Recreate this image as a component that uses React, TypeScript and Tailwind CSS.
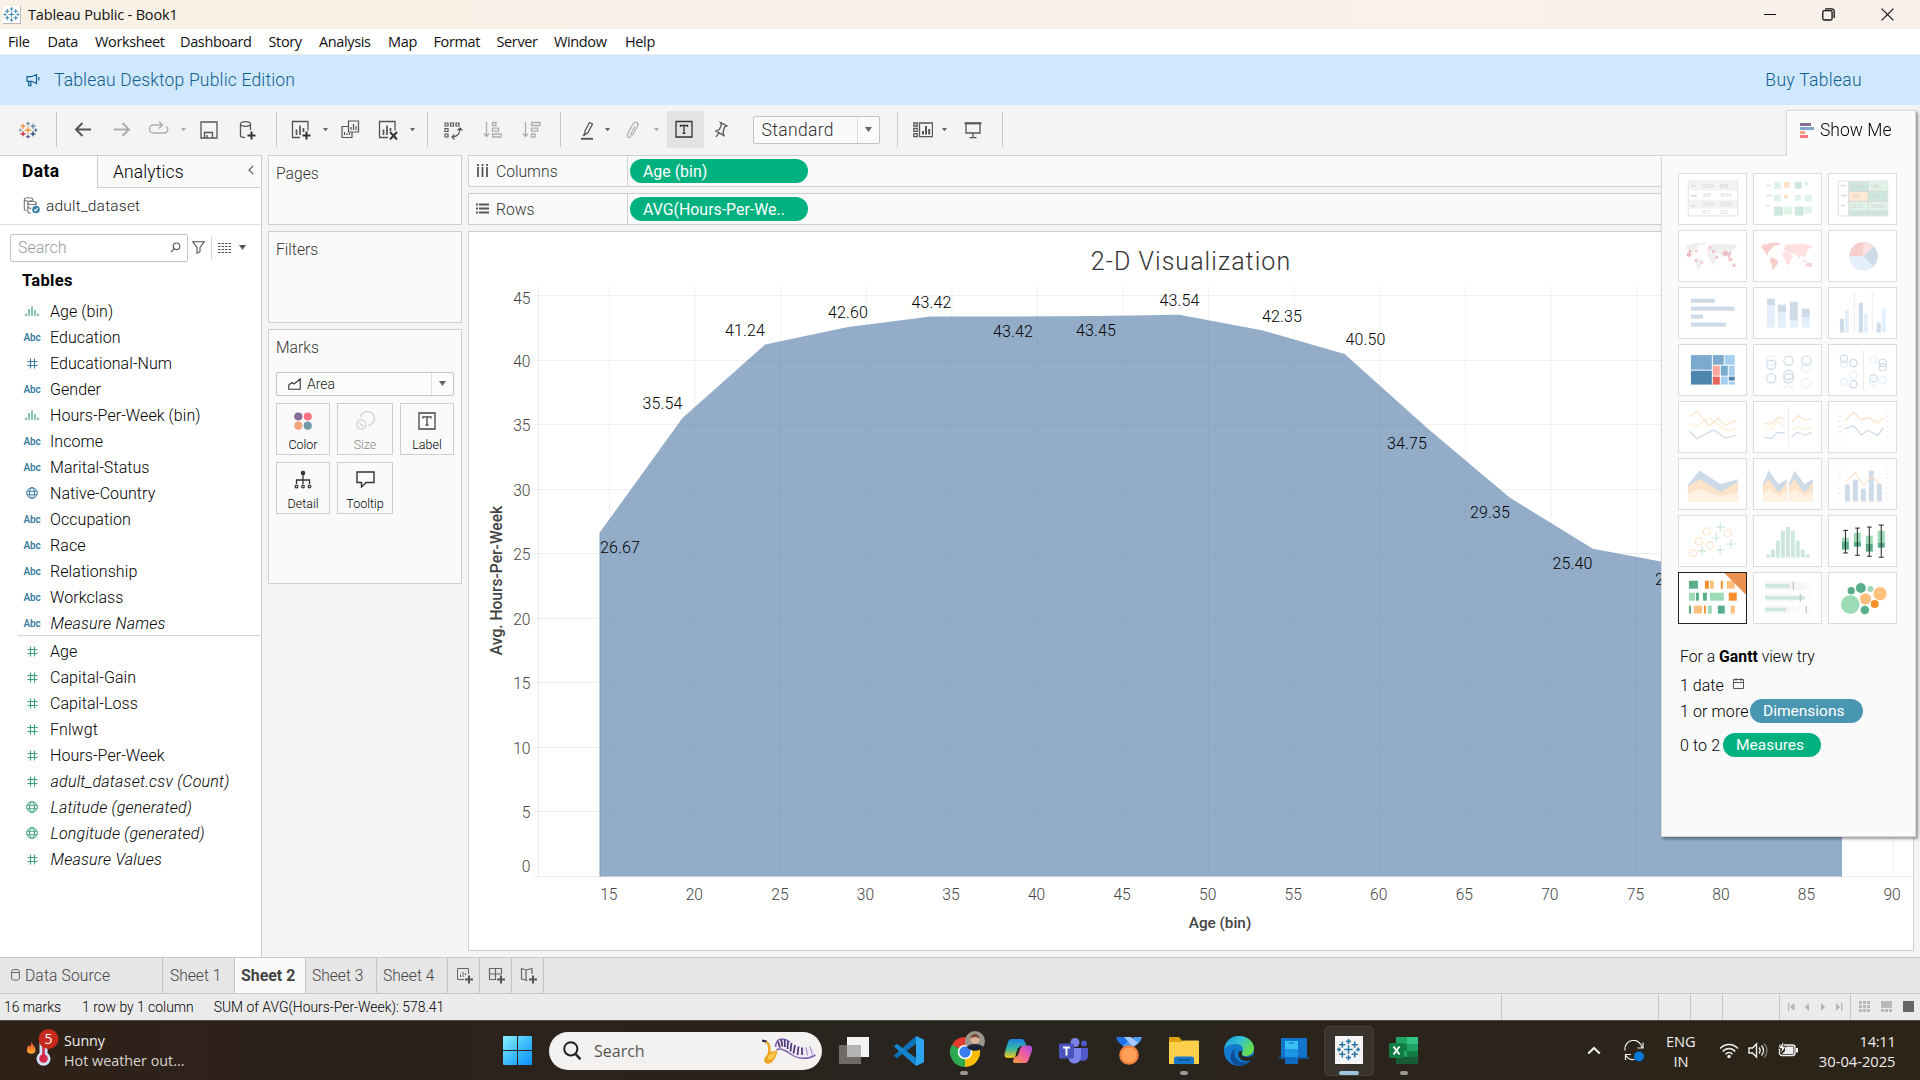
import type { ReactNode } from "react";

/* ---------- shared glyphs ---------- */

function Caret({ color = "#666", w = 6 }: { color?: string; w?: number }) {
  return (
    <svg width={w} height={w * 0.7} viewBox="0 0 6 4" preserveAspectRatio="none" className="block shrink-0">
      <path d="M0 0h6L3 4z" fill={color} />
    </svg>
  );
}

const PLUSES: [number, number, number, string][] = [
  [12, 12, 4, "#eb912c"],
  [12, 4.2, 2.4, "#7199a6"],
  [12, 19.8, 2.4, "#5c6692"],
  [6, 7.4, 3, "#eb912c"],
  [18, 7.4, 3, "#59879b"],
  [6, 16.6, 3, "#c72037"],
  [18, 16.6, 3, "#1f447e"],
  [2.8, 12, 1.9, "#8aa0b8"],
  [21.2, 12, 1.9, "#5c6692"],
];

function TableauMark({ size, mono }: { size: number; mono?: string }) {
  return (
    <svg width={size} height={size} viewBox="0 0 24 24" className="block shrink-0">
      {PLUSES.map(([x, y, r, c]) => (
        <path key={`${x}-${y}`} d={`M${x - r} ${y}h${r * 2}M${x} ${y - r}v${r * 2}`} stroke={mono ?? c} strokeWidth={1.5} fill="none" />
      ))}
    </svg>
  );
}

function Ico({ children, color = "#555", className = "" }: { children: ReactNode; color?: string; className?: string }) {
  return (
    <svg width="20" height="20" viewBox="0 0 20 20" fill="none" stroke={color} strokeWidth="1.3" className={`block shrink-0 ${className}`}>
      {children}
    </svg>
  );
}

function Sep({ className = "" }: { className?: string }) {
  return <div className={`h-[35px] w-px shrink-0 bg-[#c9c9c9] ${className}`} />;
}

/* ---------- window chrome ---------- */

function TitleBar() {
  return (
    <div className="flex h-[29px] items-center bg-gradient-to-r from-[#f9f1e5] to-[#f9f0eb] pl-[3px]">
      <div className="flex size-[18px] items-center justify-center border-r border-b border-[#b9b9b9] bg-white">
        <TableauMark size={17} mono="#3f86b3" />
      </div>
      <span className="ml-[7px] font-['Open_Sans'] text-[14.5px] tracking-[-0.16px] text-[#111]">Tableau Public - Book1</span>
      <div className="ml-auto flex items-center pr-[26px]">
        <svg width="12" height="12" viewBox="0 0 12 12" className="block"><path d="M0 5.5h12" stroke="#111" /></svg>
        <svg width="13" height="13" viewBox="0 0 13 13" fill="none" stroke="#111" strokeWidth="1.3" className="ml-[46px] block">
          <rect x="0.8" y="2.7" width="9.3" height="9.3" rx="1.5" />
          <path d="M3 .8h6.5a2.7 2.7 0 0 1 2.7 2.7v6.6" />
        </svg>
        <svg width="13" height="13" viewBox="0 0 13 13" className="ml-[46px] block"><path d="M.6.6l11.8 11.8M12.4.6.6 12.4" stroke="#111" strokeWidth="1.2" /></svg>
      </div>
    </div>
  );
}

const MENU: [string, string][] = [
  ["File", "w-[39.5px]"], ["Data", "w-[47.5px]"], ["Worksheet", "w-[85px]"], ["Dashboard", "w-[88.5px]"], ["Story", "w-[50.5px]"],
  ["Analysis", "w-[69px]"], ["Map", "w-[45.5px]"], ["Format", "w-[63px]"], ["Server", "w-[57.5px]"], ["Window", "w-[71px]"], ["Help", "w-[40px]"],
];

function MenuBar() {
  return (
    <div className="flex h-[26px] items-center border-b border-[#ededed] bg-white pt-[1px] pl-[8px] font-['Open_Sans'] text-[14.5px] tracking-[-0.36px] text-[#111]">
      {MENU.map(([label, w]) => (
        <span key={label} className={`${w} shrink-0`}>{label}</span>
      ))}
    </div>
  );
}

function Banner() {
  return (
    <div className="flex h-[50px] items-center bg-[#cfe8fe] pr-[58px] pl-[26px] text-[17.5px] font-light text-[#11608f]">
      <svg width="14" height="14" viewBox="0 0 14 14" fill="none" stroke="#11608f" strokeWidth="1.2">
        <path d="M1 3.7h4.500L10.500 1.600v8.800L5.500 8.300H1zM2.700 8.500v4.200h2.200V8.500M10.500 1v10.200M12.800 4v3.600" />
      </svg>
      <span className="ml-[14px] tracking-[0.18px]">Tableau Desktop Public Edition</span>
      <span className="ml-auto tracking-[0.32px]">Buy Tableau</span>
    </div>
  );
}

const GREY = "#adadad";

function Toolbar() {
  return (
    <div className="flex h-[50px] items-center bg-[#f4f4f4] pb-px">
      <div className="ml-[17.5px]"><TableauMark size={20} /></div>
      <Sep className="ml-[18.5px]" />
      <Ico className="ml-[16px]"><path d="M18 9.500H3M9.500 3 3 9.500 9.500 16" strokeWidth="2" /></Ico>
      <Ico className="ml-[19px]" color={GREY}><path d="M2 9.500h15M10.500 3 17 9.500 10.500 16" strokeWidth="2" /></Ico>
      <Ico className="ml-[17px]" color={GREY}><path d="M13 5H4.500a3.500 3.500 0 0 0 0 8h11a3.500 3.500 0 0 0 1.500-6.500M10 1.500 13.500 5 10 8.500" strokeWidth="1.400" /></Ico>
      <div className="ml-[11.500px]"><Caret color={GREY} w={5} /></div>
      <Ico className="ml-[13.500px]"><path d="M2 2h16v16H2zM5.500 18v-5.500h8V18M8 18v-3" /></Ico>
      <Ico className="ml-[18px]">
        <ellipse cx="8.500" cy="4" rx="5" ry="2.300" /><path d="M3.500 4v11.500c0 1 2 2 4.500 2M13.500 4v6" /><path d="M14.500 11.500v8M10.500 15.500h8" stroke="#333" strokeWidth="2" />
      </Ico>
      <Sep className="ml-[19px]" />
      <Ico className="ml-[14px]"><path d="M9 17.500H1.500V1.500h15.500v9" /><path d="M5.500 15V9.500M9 15V5.500M12.500 12V8" strokeWidth="1.700" /><path d="M15.500 11.500v8M11.500 15.500h8" stroke="#333" strokeWidth="2" /></Ico>
      <div className="ml-[11.500px]"><Caret w={5} /></div>
      <Ico className="ml-[12.500px]"><path d="M8.500 1h10v11h-10zM8 6.500H2v11h10v-5M11 10V7M13.500 10V4M16 10V6M4.500 15v-3M7 15v-2M9.500 15v-2" strokeWidth="1.200" /></Ico>
      <Ico className="ml-[17.500px]"><path d="M10 17.500H1.500V1.500h15.500v9" /><path d="M5.500 15V9.500M9 15V5.500M12.500 11V8" strokeWidth="1.700" /><path d="m12 12 7 7.500M19 12l-7 7.500" stroke="#333" strokeWidth="2" /></Ico>
      <div className="ml-[12px]"><Caret w={5} /></div>
      <Sep className="ml-[12px]" />
      <Ico className="ml-[15px]"><path d="M2 3h3v3H2zM7.500 3h3v3h-3zM13 3h3v3h-3zM2 8.500h3v3H2zM2 14h3v3H2zM9 17c5 0 8-3 8-9M11.500 14.500 9 17l2.500 2.500M14.500 10.500 17 8l2.500 2.500" strokeWidth="1.200" /></Ico>
      <Ico className="ml-[20px]" color={GREY}><path d="M3.500 2v14M1 13.500l2.500 3 2.500-3M9.500 2.500h3.500v3H9.500zM9.500 8.200h6v3h-6zM9.500 14h8.500v3H9.500z" /></Ico>
      <Ico className="ml-[19px]" color={GREY}><path d="M3.500 2v14M1 13.500l2.500 3 2.500-3M9.500 2.500H18v3H9.500zM9.500 8.200h6v3h-6zM9.500 14h3.500v3H9.500z" /></Ico>
      <Sep className="ml-[18px]" />
      <Ico className="ml-[16px]"><path d="m8 11 4.500-8.500 3 1.500L11 12.500 7.500 15zM6 15.500l1-1.500" /><path d="M4 18.800h12" strokeWidth="1.900" /></Ico>
      <div className="ml-[8.500px]"><Caret w={5} /></div>
      <Ico className="ml-[12.500px]" color={GREY}><path d="M12 6.500 8 13.500c-.8 1.500 1 2.400 1.800 1l4.700-8.200c1.900-3.600-2.500-5.700-4.300-2.600l-5 8.800c-2.400 4.600 1 6.200 3.200 3.800" strokeWidth="1.200" /></Ico>
      <div className="ml-[11.500px]"><Caret color={GREY} w={5} /></div>
      <div className="ml-[7.500px] flex h-[37px] w-[37px] shrink-0 items-center justify-center bg-[#e3e3e3] pr-[2px] pb-[1px]">
        <Ico color="#333"><path d="M2 2.500h16v15.500H2zM6.500 8v-1.500h7V8M10 6.500v8M8.500 14.300h3" /></Ico>
      </div>
      <Ico className="ml-[7px]"><path d="m9.500 2.500 6.500 3.500-2.500 1-1.500 5.500 1 3-8-4.500 3.500-1.500 2-5zM8 12.500l-3 4.500" strokeWidth="1.300" /></Ico>
      <div className="ml-[22px] flex h-[28px] w-[127px] shrink-0 items-center rounded-[2px] border border-[#c4c4c4] bg-[#fafafa]">
        <span className="flex-1 pt-[1px] pl-[8px] text-[17.500px] font-light tracking-[0.350px] text-[#333]">Standard</span>
        <div className="flex h-full w-[22px] items-center justify-center border-l border-[#ddd]"><Caret w={7} /></div>
      </div>
      <Sep className="ml-[17px]" />
      <Ico className="ml-[15px]"><path d="M.800 3h3.400v3H.800zM.800 8.300h3.400v3H.800zM.800 13.600h3.400v3H.800zM6.500 3h13v13.600h-13z" /><path d="M10 14.500V11M13 14.500V6M16.200 14.500V9" strokeWidth="2" /></Ico>
      <div className="ml-[9px]"><Caret w={5} /></div>
      <Ico className="ml-[16px]"><path d="M3 3.500h14v9.500H3zM10 13v4.500M6.500 17.700h7" /><path d="M1.500 3.200h17" strokeWidth="1.900" /></Ico>
      <Sep className="ml-[19px]" />
    </div>
  );
}

/* ---------- data pane ---------- */

type Kind = "bin" | "abc" | "num" | "geo";
const DIMS: [Kind, string, boolean?][] = [
  ["bin", "Age (bin)"], ["abc", "Education"], ["num", "Educational-Num"], ["abc", "Gender"], ["bin", "Hours-Per-Week (bin)"],
  ["abc", "Income"], ["abc", "Marital-Status"], ["geo", "Native-Country"], ["abc", "Occupation"], ["abc", "Race"],
  ["abc", "Relationship"], ["abc", "Workclass"], ["abc", "Measure Names", true],
];
const MEAS: [Kind, string, boolean?][] = [
  ["num", "Age"], ["num", "Capital-Gain"], ["num", "Capital-Loss"], ["num", "Fnlwgt"], ["num", "Hours-Per-Week"],
  ["num", "adult_dataset.csv (Count)", true], ["geo", "Latitude (generated)", true], ["geo", "Longitude (generated)", true], ["num", "Measure Values", true],
];

function KindIcon({ kind, color }: { kind: Kind; color: string }) {
  if (kind === "abc") return <span className="text-[10px] font-semibold tracking-[-0.2px]" style={{ color }}>Abc</span>;
  if (kind === "bin")
    return (
      <svg width="14" height="10" viewBox="0 0 14 10"><path d="M1 7.500V10M4 3v7M7 .500V10M10 4v6M13 7.500V10" stroke="#3ba27c" strokeWidth="1.200" /></svg>
    );
  if (kind === "num")
    return (
      <svg width="11" height="11" viewBox="0 0 11 11"><path d="M3.500.500v10M7.500.500v10M.500 3.500h10M.500 7.500h10" stroke={color} strokeWidth="1.100" /></svg>
    );
  return (
    <svg width="12" height="12" viewBox="0 0 12 12" fill="none" stroke={color} strokeWidth="1"><circle cx="6" cy="6" r="5.300" /><ellipse cx="6" cy="6" rx="2.500" ry="5.300" /><path d="M1.200 4.200h9.600M1.200 7.800h9.600" /></svg>
  );
}

function Field({ f, color }: { f: [Kind, string, boolean?]; color: string }) {
  return (
    <div className="flex h-[26px] items-center pl-[24px]">
      <div className="flex w-[16px] justify-center">
        <KindIcon kind={f[0]} color={color} />
      </div>
      <span className={f[2] ? "ml-[10.5px] pt-[1px] text-[16px] font-light tracking-[0.22px] italic" : "ml-[10px] pt-[1px] text-[16px] font-light tracking-[0.07px]"}>{f[1]}</span>
    </div>
  );
}

function DataPane() {
  return (
    <div className="flex w-[262px] shrink-0 flex-col border-t border-r border-[#cfcfcf] bg-white text-black">
      <div className="flex h-[32px]">
        <div className="flex w-[97px] items-center pb-[1px] pl-[22px] text-[17.5px] font-bold tracking-[0.4px]">Data</div>
        <div className="flex flex-1 items-center border-b border-l border-[#cfcfcf] bg-[#fafafa] pt-[1px] pl-[15px]">
          <span className="text-[17.5px] font-light tracking-[0.12px]">Analytics</span>
          <svg width="6" height="10" viewBox="0 0 6 10" className="mr-[7px] mb-[4px] ml-auto"><path d="M5.200.800 1 5l4.200 4.200" fill="none" stroke="#555" strokeWidth="1.200" /></svg>
        </div>
      </div>
      <div className="flex h-[37px] items-center border-b border-[#dedede] pl-[23px]">
        <svg width="18" height="17" viewBox="0 0 18 17" fill="none" stroke="#777" strokeWidth="1.100" className="mb-[2px]">
          <ellipse cx="5.500" cy="2.500" rx="4.200" ry="1.700" /><path d="M1.300 2.500v9.500c0 .8 1 1.300 2 1.600M9.700 2.500v1" /><ellipse cx="9" cy="6" rx="4.200" ry="1.700" /><path d="M4.800 6v8.500c0 .8 1.500 1.500 3 1.700M13.200 6v2.500M4.800 10c.5 1 2 1.300 3.500 1.400" />
          <circle cx="13" cy="12.500" r="3.800" fill="#3c83a8" stroke="none" /><path d="m11.300 12.500 1.300 1.300 2-2.600" stroke="#fff" />
        </svg>
        <span className="ml-[5px] pt-[1px] text-[15.500px] font-light tracking-[0.200px] text-[#222]">adult_dataset</span>
      </div>
      <div className="mt-[8px] flex h-[29px] items-center pl-[10px]">
        <div className="flex h-[28px] w-[178px] items-center rounded-[2px] border border-[#c4c4c4] pr-[6px] pl-[7px]">
          <span className="text-[16px] font-light text-[#999]">Search</span>
          <svg width="11" height="11" viewBox="0 0 11 11" className="ml-auto" fill="none" stroke="#555" strokeWidth="1.100"><circle cx="6.500" cy="4.300" r="3.300" /><path d="M4.200 6.800.800 10.200" /></svg>
        </div>
        <svg width="13" height="13" viewBox="0 0 13 13" className="ml-[4px]" fill="none" stroke="#555" strokeWidth="1.100"><path d="M.800.800h11.400L8 6.500v4.200L5 12.200V6.500z" /></svg>
        <div className="ml-[6px] h-[22px] w-px bg-[#d0d0d0]" />
        <svg width="13" height="10" viewBox="0 0 13 10" className="ml-[6px]"><path d="M0 .500h13M0 3.500h13M0 6.500h13M0 9.500h13" stroke="#555" strokeWidth="1" strokeDasharray="2.500 1" /></svg>
        <div className="ml-[8px]"><Caret w={7} color="#555" /></div>
      </div>
      <div className="mt-[7px] flex h-[24px] items-center pl-[22px] text-[16.500px] font-bold tracking-[0.300px]">Tables</div>
      <div className="mt-[5px]">
        {DIMS.map((f) => <Field key={f[1]} f={f} color="#3a7d9f" />)}
      </div>
      <div className="mt-[-1px] ml-[18px] h-px bg-[#d4d4d4]" />
      <div className="mt-[2px]">
        {MEAS.map((f) => <Field key={f[1]} f={f} color="#3ba27c" />)}
      </div>
    </div>
  );
}

/* ---------- cards ---------- */

function MarkButton({ label, w, dim, children }: { label: string; w: string; dim?: boolean; children: ReactNode }) {
  return (
    <div className={`flex h-[52px] ${w} flex-col items-center border border-[#cecece] bg-[#fafafa]`}>
      <div className="flex h-[34px] items-center">{children}</div>
      <span className={`font-light text-[12.5px] leading-[14px] ${dim ? "text-[#888]" : "text-[#000]"}`}>{label}</span>
    </div>
  );
}

function Cards() {
  const title = "text-[15.7px] font-light text-[#333]";
  const card = "border border-[#d0d0d0] bg-[#fafafa] pl-[7px]";
  return (
    <div className="ml-[6px] flex w-[194px] shrink-0 flex-col">
      <div className={`${card} h-[70px] pt-[6px]`}><span className={title}>Pages</span></div>
      <div className={`${card} mt-[6px] h-[92px] pt-[6px]`}><span className={title}>Filters</span></div>
      <div className={`${card} mt-[6px] h-[255px] pt-[6px]`}>
        <div className={title}>Marks</div>
        <div className="mt-[12px] flex h-[24px] w-[178px] items-center rounded-[2px] border border-[#c4c4c4] bg-[#fcfcfc] pl-[11px]">
          <svg width="13" height="12" viewBox="0 0 13 12" fill="none" stroke="#333" strokeWidth="1.100"><path d="M.800 11.300V7L4 4.500l2 1.500L12.200.800v10.500z" /></svg>
          <span className="ml-[6px] flex-1 pt-[1px] text-[14px] font-light text-[#222]">Area</span>
          <div className="flex h-full w-[22px] items-center justify-center border-l border-[#ddd]"><Caret w={7} /></div>
        </div>
        <div className="mt-[7px] flex gap-[7px]">
          <MarkButton label="Color" w="w-[54px]">
            <svg width="18" height="18" viewBox="0 0 18 18"><circle cx="4.300" cy="4.500" r="4.100" fill="#866f97" /><circle cx="13.700" cy="4.500" r="4.100" fill="#fc7381" /><circle cx="4.300" cy="13.700" r="4.100" fill="#f2a57c" /><circle cx="13.700" cy="13.700" r="4.100" fill="#7199a6" /></svg>
          </MarkButton>
          <MarkButton label="Size" w="w-[56px]" dim>
            <svg width="19" height="19" viewBox="0 0 19 19" fill="none" stroke="#cfcfcf" strokeWidth="1.200"><path d="M4.500 6.500A7 7 0 1 1 12 14.500" /><circle cx="5.300" cy="13.500" r="4.600" /><path d="m3.500 12 4 3.500" /></svg>
          </MarkButton>
          <MarkButton label="Label" w="w-[54px]">
            <svg width="18" height="18" viewBox="0 0 18 18" fill="none" stroke="#444" strokeWidth="1.300"><path d="M1 1h16v16H1zM5 6.500V4.800h8v1.700M9 5v8M7.500 13h3" /></svg>
          </MarkButton>
        </div>
        <div className="mt-[7px] flex gap-[7px]">
          <MarkButton label="Detail" w="w-[54px]">
            <svg width="18" height="19" viewBox="0 0 18 19" fill="none" stroke="#333" strokeWidth="1.300"><circle cx="9" cy="3" r="2.300" fill="#333" stroke="none" /><path d="M9 4v10M2.500 14v-4h13v4" /><circle cx="2.500" cy="16.500" r="1.300" /><circle cx="9" cy="16.500" r="1.300" /><circle cx="15.500" cy="16.500" r="1.300" /></svg>
          </MarkButton>
          <MarkButton label="Tooltip" w="w-[56px]">
            <svg width="19" height="17" viewBox="0 0 19 17" fill="none" stroke="#333" strokeWidth="1.400"><path d="M1 1h17v10.500H10L5.500 16v-4.500H1z" /></svg>
          </MarkButton>
        </div>
      </div>
    </div>
  );
}

/* ---------- shelves and chart ---------- */

function Shelf({ label, pill, icon }: { label: string; pill: string; icon: ReactNode }) {
  return (
    <div className="flex h-[32px] items-center border border-[#d0d0d0] bg-[#fafafa]">
      <div className="flex h-full w-[159px] items-center border-r border-[#d0d0d0] pl-[7px]">
        <div className="mb-[2px]">{icon}</div>
        <span className="ml-[7px] pt-[1.5px] text-[15.7px] font-light text-[#333]">{label}</span>
      </div>
      <div className="ml-[2px] flex h-[24px] w-[178px] items-center rounded-full bg-[#00b180] pt-[2px] pl-[13px] text-[15.900px] text-white">{pill}</div>
    </div>
  );
}

const VALUES = [26.67, 35.54, 41.24, 42.6, 43.42, 43.42, 43.45, 43.54, 42.35, 40.5, 34.75, 29.35, 25.4, 24.2, 24.6, 22.5];
const LABELS: [string, number, number][] = [
  ["26.67", 620, 547.5], ["35.54", 662.5, 403.5], ["41.24", 745, 330.5], ["42.60", 848, 312.5], ["43.42", 931.5, 302.5], ["43.42", 1013, 331.5], ["43.45", 1096, 330.5],
  ["43.54", 1179.500, 300.500], ["42.35", 1282, 316.500], ["40.50", 1365.500, 339.500], ["34.75", 1407, 443.500], ["29.35", 1490, 512.500], ["25.40", 1572.500, 563.500], ["24.18", 1675, 579.500],
];

function Chart() {
  const x0 = 599.7, step = 82.77, y0 = 876.5;
  const pts = VALUES.map((v, i) => `${(x0 + i * step).toFixed(1)},${(y0 - v * 12.9).toFixed(1)}`).join(" ");
  const ys = [45, 40, 35, 30, 25, 20, 15, 10, 5, 0];
  const xs = Array.from({ length: 16 }, (_, i) => 15 + i * 5);
  const tickY = (v: number) => (v === 0 ? 872 : y0 - v * 12.9 + (v === 45 ? 7.5 : 6));
  return (
    <svg width="1444" height="718" viewBox="469 232 1444 718" className="block font-['Roboto']">
      {xs.map((x, i) => <path key={x} d={`M${609.500 + i * 85.600} 287V877`} stroke="#f0f0f0" />)}
      {ys.map((v) => <path key={v} d={`M533 ${Math.round(y0 - v * 12.900) - 0.500}H1913`} stroke="#efefef" />)}
      <path d="M538.500 287V877" stroke="#ebebeb" />
      <polygon points={`${x0},${y0} ${pts} ${x0 + 15 * step},${y0}`} fill="#4e79a7" fillOpacity="0.610" />
      <path d={`M${x0 + 0.500} 533V877`} stroke="#7f9fc4" />
      <path d={`M${x0 + 15 * step} 600V877`} stroke="#7f9fc4" />
      <g fontSize="15.600" fontWeight="300" fill="#444">
        {ys.map((v) => <text key={v} x="530.500" y={tickY(v)} textAnchor="end">{v}</text>)}
        {xs.map((x, i) => <text key={x} x={608.800 + i * 85.550} y="900" textAnchor="middle">{x}</text>)}
      </g>
      <g fontSize="16" fontWeight="300" fill="#000" letterSpacing="0.150">
        {LABELS.map(([t, x, y]) => <text key={`${t}${x}`} x={x} y={y + 5.500} textAnchor="middle">{t}</text>)}
      </g>
      <text x="1191" y="270" textAnchor="middle" fontSize="25" fontWeight="300" fill="#333" letterSpacing="1.050">2-D Visualization</text>
      <text x="1220" y="928" textAnchor="middle" fontSize="15.300" fontWeight="500" fill="#444">Age (bin)</text>
      <text transform="translate(502 580.500) rotate(-90)" textAnchor="middle" fontSize="15.600" fontWeight="500" fill="#444">Avg. Hours-Per-Week</text>
    </svg>
  );
}

/* ---------- Show Me ---------- */

const B1 = "#cddae7", B2 = "#e3f0fb", G1 = "#cde7dc", G2 = "#e0f3e8", O1 = "#fde3c8", O2 = "#fff2e2", R1 = "#f6cfcd", R2 = "#ffe0e0";
const AMERICAS = "M25 48l6-5 12-1 10-4 12 2 4 4-8 4-4 6-4 6-6 5-4 5 3 6-6-2-7-10-2-6-6-4zM52 83l6-1 8 5 9 6-1 8-7 7-4 8-3 6-4-8-1-12-5-9zM62 38l20 0-5 7-10 1z";
const OLD_WORLD = "M87 70l13-4 12 4 4 8 4 3-7 8-2 9-6 8-4-2-5-14-1-6-8-3zM91 60l4-12 10-8 6 3 14 0 18-3 20 3 15 4-2 6-8 2-2 5-5 1 1 8-8 8-3 9-5-9-4 0-4 9-5-9-8-6-8 0-4-4-6 0-8-2z";
const OCEANIA = "M157 103l8-5 4 2 5-3 3 10-5 5-8-3-6 1zM150 90l10 4-2 3-9-3z";

function rects(list: [number, number, number, number, string][]) {
  return list.map(([x, y, w, h, c], i) => <rect key={i} x={x} y={y} width={w} height={h} fill={c} />);
}
function dots(list: [number, number, number, string][]) {
  return list.map(([x, y, r, c], i) => <circle key={i} cx={x} cy={y} r={r} fill={c} />);
}
function rings(list: [number, number, string][], r: number) {
  return list.map(([x, y, c], i) => <circle key={i} cx={x} cy={y} r={r} fill="none" stroke={c} strokeWidth="3.500" />);
}
function line(d: string, c: string, w = 3.500) {
  return <path d={d} fill="none" stroke={c} strokeWidth={w} />;
}
function tiny(list: [number, number, string][]) {
  return list.map(([x, y, t], i) => <text key={i} x={x} y={y} fontSize="17" fill="#d2d2d2" fontFamily="Liberation Serif">{t}</text>);
}

const THUMBS: ReactNode[] = [
  <>{rects([[31, 25, 147, 28, "#f3f3f3"], [31, 80, 147, 27, "#f3f3f3"], [38, 36, 15, 5, "#ddd"], [38, 66, 18, 5, "#ddd"], [38, 96, 12, 5, "#ddd"]])}<rect x="30" y="24" width="149" height="105" fill="none" stroke="#e3e3e3" strokeWidth="3" />{tiny([[72, 46, "1234"], [125, 46, "678"], [72, 73, "368"], [125, 73, "3034"], [72, 100, "2620"], [125, 100, "2559"], [72, 124, "971"], [125, 124, "322"]])}</>,
  <>{rects([[38, 35, 15, 5, "#e3e3e3"], [38, 65, 18, 5, "#e3e3e3"], [38, 95, 12, 5, "#e3e3e3"], [62, 26, 21, 21, G2], [92, 26, 18, 18, O1], [125, 26, 21, 21, G1], [155, 26, 12, 12, G2], [62, 65, 21, 21, G2], [92, 65, 12, 12, O1], [125, 66, 18, 17, G2], [155, 65, 21, 21, G2], [62, 101, 27, 27, G1], [92, 101, 24, 24, G2], [125, 101, 27, 27, G1], [155, 101, 21, 21, G2]])}</>,
  <>{rects([[62, 25, 58, 30, G1], [120, 25, 58, 30, G2], [62, 55, 58, 30, "#ffe9d2"], [120, 55, 58, 30, G1], [62, 85, 58, 30, G2], [120, 85, 58, 30, G2], [62, 115, 58, 14, G1], [120, 115, 58, 14, G1], [38, 35, 15, 5, "#ddd"], [38, 65, 18, 5, "#ddd"], [38, 95, 12, 5, "#ddd"]])}{line("M62 25v104M120 25v104M62 55h116M62 85h116M62 115h116", "#d5d5d5", 3)}<rect x="30" y="24" width="149" height="105" fill="none" stroke="#e0e0e0" strokeWidth="3" />{tiny([[70, 45, "1234"], [127, 45, "546"], [70, 76, "368"], [127, 76, "342"], [70, 106, "2620"], [127, 106, "53890"]])}</>,
  <><path d={AMERICAS + OLD_WORLD + OCEANIA} fill="#efefef" />{dots([[32, 74, 7, "#ecbcc3"], [35, 63, 4, "#e9b0b8"], [54, 63, 5, "#f8d3d3"], [95, 52, 5, "#f4c6c8"], [90, 62, 5, R2], [106, 64, 5, "#ecbcc3"], [142, 70, 8, "#ecbcc3"], [155, 70, 4, "#ecbcc3"], [153, 78, 4, "#ecbcc3"], [157, 88, 6, "#f4c6c8"], [116, 82, 4, "#ecbcc3"], [53, 92, 4, "#ecbcc3"], [71, 97, 5, "#f8d3d3"], [168, 107, 4, "#ecbcc3"]])}</>,
  <><path d={OLD_WORLD} fill={R2} /><path d={AMERICAS + OCEANIA} fill={R1} /></>,
  <><circle cx="106" cy="79" r="43" fill={B2} /><path d="M106 79H63a43 43 0 0 1 43-43z" fill={R1} /><path d="M106 79V36a43 43 0 0 1 30 12.600z" fill={R2} /><path d="M106 79l30-30.400a43 43 0 0 1 0 61z" fill={B1} /></>,
  <>{rects([[38, 35, 72, 12, B1], [38, 59, 132, 12, B1], [38, 83, 36, 12, B1], [38, 107, 105, 12, B1]])}</>,
  <>{rects([[41, 35, 24, 21, B1], [41, 56, 24, 66, B2], [74, 53, 24, 24, B1], [74, 77, 24, 45, B2], [110, 44, 24, 57, B1], [110, 101, 24, 21, B2], [146, 65, 24, 27, B1], [146, 92, 24, 30, B2]])}</>,
  <>{rects([[35, 95, 12, 42, B1], [50, 68, 12, 69, B2], [77, 17, 3, 120, "#ececec"], [92, 47, 12, 90, B1], [107, 80, 12, 57, B2], [131, 17, 3, 120, "#ececec"], [146, 107, 12, 30, B1], [161, 65, 12, 72, B2]])}</>,
  <>{rects([[38, 33, 63, 44, "#7baacf"], [38, 80, 63, 42, "#4f86af"], [104, 33, 33, 29, "#7baacf"], [140, 33, 30, 29, "#a4cff0"], [104, 65, 21, 30, "#ffa79f"], [128, 65, 21, 30, "#7baacf"], [152, 65, 18, 30, "#a4cff0"], [104, 98, 21, 24, "#e4645c"], [128, 98, 21, 24, "#a4cff0"], [152, 98, 18, 12, "#4f86af"], [152, 113, 18, 9, "#a4cff0"]])}</>,
  <>{rings([[54, 50, B2], [54, 62, B1], [54, 103, B1], [106, 50, B1], [106, 93, B1], [106, 103, B1], [160, 50, B1], [160, 71, B2], [160, 118, B2]], 14)}{line("M92 140a14 14 0 0 1 28 0", B2)}</>,
  <>{rings([[47, 44, B1], [47, 59, B2], [76, 57, B1], [76, 93, B2], [47, 115, B2], [76, 121, B1], [136, 46, B2], [164, 57, B1], [164, 70, B1], [136, 103, B1], [136, 115, B2], [164, 109, B2]], 11)}{line("M106 18v120", "#ececec", 3)}</>,
  <>{line("M33 68l24 8 35-26 50 38 33-5", "#fff0d3")}{line("M35 48l21-18 36 44 28-22 22 21 33-15", O1)}{line("M33 90l23 23 50-26 37 24 32-8", B1)}</>,
  <>{line("M32 65l20 5 22-20 20 1M115 65l20-22 20 15 20-5", O1)}{line("M32 87l20-2 22-24 18 15M115 86l22-8 20 8 20-8", "#fff0d3")}{line("M32 108l22 5 18-18h22M115 108l18-14 22 8 22-7", B1)}{line("M106 18v120", "#ececec", 3)}</>,
  <>{line("M48 60l28-26 24 23 20-8 28 17 18-16", O1)}{line("M48 84l28-10 24 28 20-14 28 16 17-22", B1)}<path d="M34 30v95M178 30v95" stroke="#ebebeb" strokeWidth="9" strokeDasharray="2.500 12.500" /></>,
  <><path d="M29 80L64 37l63 42 52-15v68H29z" fill={B1} /><path d="M29 86l35-23 63 40 52-32v60H29z" fill={O1} /><path d="M29 108l35-16 63 22 52-12v30H29z" fill={O2} /></>,
  <><path d="M29 78L46 37l30 42 25-15v68H29zM107 78l17-41 30 42 25-15v68h-72z" fill={B1} /><path d="M29 84l17-21 30 42 25-32v59H29zM107 84l17-21 30 42 25-32v59h-72z" fill={O1} /><path d="M29 108l17-16 30 22 25-12v30H29zM107 108l17-16 30 22 25-12v30h-72z" fill={O2} /></>,
  <>{rects([[50, 80, 15, 51, B1], [74, 65, 15, 66, B1], [98, 92, 15, 39, B1], [122, 38, 15, 93, B1], [146, 77, 15, 54, B1]])}{line("M54 70l27-26 25 38 26-27 27 27", O1)}<path d="M34 30v95M178 30v95" stroke="#ebebeb" strokeWidth="9" strokeDasharray="2.500 12.500" /></>,
  <>{rings([[86, 49, O1], [149, 55, O1], [62, 79, O1], [95, 91, O1], [44, 115, O1]], 11)}{line("M126 22v27M113 36h27M114 55v27M100 69h27M72 94v27M59 108h27M159 73v27M146 87h27M126 92v27M113 105h27", G1)}</>,
  <>{rects([[38, 119, 12, 9, G1], [53, 104, 12, 24, G1], [68, 77, 12, 51, G1], [83, 47, 12, 81, G1], [98, 35, 12, 93, G1], [113, 47, 12, 81, G1], [128, 77, 12, 51, G1], [143, 104, 12, 24, G1], [158, 119, 12, 9, G1]])}</>,
  <>{rects([[41, 68, 21, 12, "#9ddbb7"], [41, 80, 21, 24, "#57ae89"], [77, 53, 21, 27, "#9ddbb7"], [77, 80, 21, 15, "#57ae89"], [113, 62, 21, 24, "#9ddbb7"], [113, 86, 21, 24, "#57ae89"], [149, 47, 21, 36, "#9ddbb7"], [149, 83, 21, 15, "#57ae89"]])}{line("M51.500 45v70M45 46h14M45 114h14M87.500 39v82M81 39h14M81 121h14M123.500 36v88M117 36h14M117 124h14M159.500 30v96M152 30h15M152 127h15", "#222", 3)}</>,
  <>{rects([[32, 26, 27, 24, "#57ae89"], [80, 26, 12, 24, "#f58f2c"], [95, 26, 12, 24, "#ffbf7d"], [128, 26, 6, 24, "#f58f2c"], [146, 26, 24, 24, "#ffbf7d"], [32, 62, 18, 24, "#9ddbb7"], [53, 62, 9, 24, "#57ae89"], [74, 62, 12, 24, "#57ae89"], [95, 62, 42, 24, "#9ddbb7"], [152, 62, 24, 24, "#f58f2c"], [32, 101, 6, 24, "#57ae89"], [47, 101, 24, 24, "#ffbf7d"], [77, 101, 6, 24, "#f58f2c"], [89, 101, 12, 24, "#9ddbb7"], [119, 101, 21, 24, "#57ae89"], [158, 101, 12, 24, "#ffbf7d"]])}<path d="M136 0h70v70z" fill="#eb9150" /></>,
  <>{rects([[35, 29, 137, 24, "#fbfbfb"], [35, 29, 120, 24, "#f6f6f6"], [35, 65, 137, 24, "#fbfbfb"], [35, 65, 90, 24, "#f6f6f6"], [35, 101, 137, 24, "#fbfbfb"], [35, 101, 75, 24, "#f6f6f6"], [35, 36, 75, 11, G1], [35, 72, 120, 11, G1], [35, 107, 63, 11, G1], [119, 29, 3, 24, "#b5b5b5"], [140, 65, 3, 24, "#b5b5b5"], [158, 101, 3, 24, "#b5b5b5"]])}</>,
  <>{dots([[66, 98, 28, "#9ddbb7"], [69, 56, 11, "#57ae89"], [98, 48, 15, "#57ae89"], [127, 51, 9, "#9ddbb7"], [156, 65, 20, "#ffbf7d"], [112, 81, 17, "#ffbf7d"], [140, 96, 12, "#f58f2c"], [110, 114, 13, "#57ae89"]])}</>,
];

function ShowMe() {
  return (
    <div className="absolute top-[110px] right-[4px] flex w-[255px] flex-col drop-shadow-[2px_2px_1.5px_rgba(0,0,0,0.4)]">
      <div className="z-10 ml-auto flex h-[46px] w-[130px] items-center border-t border-r border-l border-[#d9d9d9] bg-[#fafafa] pb-[7px] pl-[13px]">
        <svg width="14" height="15" viewBox="0 0 14 15"><path d="M0 0h11v3H0z" fill="#866f97" /><path d="M0 4h14v3H0z" fill="#7fa5cc" /><path d="M0 8h5v3H0z" fill="#f2a57c" /><path d="M0 12h8v3H0z" fill="#fc7381" /></svg>
        <span className="ml-[6px] pt-[1px] text-[17.500px] font-light text-black">Show Me</span>
      </div>
      <div className="mt-[-1px] h-[682px] border border-[#d9d9d9] bg-[#fafafa] pt-[17px] pl-[16px] text-[16px] font-light text-black">
        <div className="grid w-[219px] grid-cols-3 gap-x-[6px] gap-y-[5px]">
          {THUMBS.map((t, i) => (
            <div key={i} className={`h-[52px] w-[69px] border bg-white ${i === 21 ? "border-[#222]" : "border-[#dcdcdc]"}`}>
              <svg width="67" height="50" viewBox="2 3 202 150" className="block">{t}</svg>
            </div>
          ))}
        </div>
        <div className="mt-[21px] flex h-[24px] items-center whitespace-pre pl-[2px] text-[15.800px]">For a <b className="font-bold">Gantt</b> view try</div>
        <div className="mt-[5px] flex h-[24px] items-center pl-[2px]">
          1 date
          <svg width="11" height="11" viewBox="0 0 11 11" className="mb-[5px] ml-[9px]" fill="none" stroke="#555"><path d="M.500 1.500h10v9H.500zM.500 4.500h10M3 0v3M8 0v3" /></svg>
        </div>
        <div className="mt-[1px] flex h-[26px] items-center pl-[2px]">
          <span className="w-[67px] tracking-[0.100px]">1 or more</span>
          <span className="ml-[3px] mb-[2px] flex h-[24px] w-[113px] items-center rounded-full bg-[#4996b2] pt-[1px] pl-[13px] text-[15.500px] font-normal text-white">Dimensions</span>
        </div>
        <div className="mt-[8px] flex h-[26px] items-center pl-[2px]">
          <span className="w-[40px] tracking-[0.100px]">0 to 2</span>
          <span className="ml-[3px] mb-[2px] flex h-[24px] w-[98px] items-center rounded-full bg-[#00b180] pt-[1px] pl-[13px] text-[15.500px] font-normal text-white">Measures</span>
        </div>
      </div>
    </div>
  );
}

/* ---------- sheet tabs and status ---------- */

function SheetTabs() {
  const tab = "flex h-full shrink-0 items-center border-r border-[#c4c4c4]";
  const plus = <path d="M13 8.500v8M9 12.500h8" stroke="#555" strokeWidth="2" />;
  return (
    <div className="flex h-[37px] border-y border-[#c9c9c9] bg-[#e6e6e6] text-[15.600px] font-light text-[#444]">
      <div className={`${tab} w-[163px] pt-[2px] pl-[11px]`}>
        <svg width="9" height="12" viewBox="0 0 9 12" fill="none" stroke="#666" className="mb-[4px]"><rect x=".600" y=".600" width="7.800" height="10.500" rx="2" /><path d="M.600 3.500h7.800" /></svg>
        <span className="ml-[5px] tracking-[0.150px]">Data Source</span>
      </div>
      <div className={`${tab} w-[72px] pt-[2px] pl-[7px]`}>Sheet 1</div>
      <div className={`${tab} w-[71px] bg-[#fafafa] pt-[1px] pl-[6px] text-[15.900px] font-bold`}>Sheet 2</div>
      <div className={`${tab} w-[71px] pt-[2px] pl-[6px]`}>Sheet 3</div>
      <div className={`${tab} w-[71px] pt-[2px] pl-[6px]`}>Sheet 4</div>
      <div className={`${tab} w-[32px] justify-center pl-[1px]`}>
        <svg width="17" height="17" viewBox="0 0 17 17" fill="none" stroke="#666"><path d="M8 12.500H1.500v-11h11V7M4.500 10V7.500M7 10V5M9.500 8V6" />{plus}</svg>
      </div>
      <div className={`${tab} w-[32px] justify-center pl-[1px]`}>
        <svg width="17" height="17" viewBox="0 0 17 17" fill="none" stroke="#666"><path d="M8 12.500H1.500v-11h12V7M1.500 7h12M7.500 1.500v11" strokeWidth="1.200" />{plus}</svg>
      </div>
      <div className={`${tab} w-[32px] justify-center pl-[1px]`}>
        <svg width="17" height="17" viewBox="0 0 17 17" fill="none" stroke="#666"><path d="M7.500 13.500 1.500 12V1.500L6 3l6-1.500V7M6 3v10" strokeWidth="1.200" />{plus}</svg>
      </div>
    </div>
  );
}

function StatusBar() {
  const cell = "h-full shrink-0 border-l border-[#c9c9c9]";
  return (
    <div className="flex h-[26px] items-center bg-[#ebebeb] pl-[4px] text-[13.9px] font-light text-black">
      <span>16 marks</span>
      <span className="ml-[21px]">1 row by 1 column</span>
      <span className="ml-[20px]">SUM of AVG(Hours-Per-Week): 578.41</span>
      <div className={`${cell} ml-auto w-[157px]`} />
      <div className={`${cell} w-[32px]`} />
      <div className={`${cell} w-[32px]`} />
      <div className={`${cell} w-[57px]`} />
      <div className={`${cell} flex w-[71px] items-center pb-[1px] pl-[8px]`}>
        <svg width="55" height="8" viewBox="0 0 55 8" fill="#b3b3b3"><path d="M0 0h1.300v8H0zM6.500 0v8L2 4zM21 0v8l-4-4zM33 0v8l4-4zM48 0v8l4-4zM53 0h1.300v8H53z" /></svg>
      </div>
      <div className={`${cell} flex w-[70px] items-center pb-[1px] pl-[8px]`}>
        <svg width="55" height="11" viewBox="0 0 55 11"><path d="M0 0h3v3H0zM4 0h3v3H4zM8 0h3v3H8zM0 4h3v3H0zM4 4h3v3H4zM8 4h3v3H8zM0 8h3v3H0zM4 8h3v3H4zM8 8h3v3H8zM22 0h11v7H22zM22 8h3v3h-3zM26 8h3v3h-3zM30 8h3v3h-3z" fill="#b8b8b8" /><path d="M44 0h11v11H44z" fill="#666" /></svg>
      </div>
    </div>
  );
}

/* ---------- taskbar ---------- */

function AppSlot({ children, running, active }: { children: ReactNode; running?: boolean; active?: boolean }) {
  return (
    <div className={`relative mr-[5px] flex size-[50px] shrink-0 items-center justify-center ${active ? "rounded-[5px] border border-[#464039] bg-[#38332d]" : ""}`}>
      {children}
      {running && <div className="absolute bottom-[1px] left-1/2 h-[4px] w-[8px] -translate-x-1/2 rounded-full bg-[#9b9894]" />}
      {active && <div className="absolute bottom-0 left-1/2 h-[4px] w-[20px] -translate-x-1/2 rounded-full bg-[#9cc6dc]" />}
    </div>
  );
}

function Taskbar() {
  return (
    <div className="flex h-[60px] items-center border-t border-[#4a4a40] bg-gradient-to-r from-[#2f2118] via-[#28241f] to-[#2c2417] font-['Open_Sans'] text-[#eee]">
      <div className="flex w-[498px] shrink-0 items-center pl-[27px]">
        <svg width="34" height="38" viewBox="0 0 34 38" className="mb-[7px]">
          <defs><linearGradient id="fl" x1="0" y1="0" x2="0" y2="1"><stop offset="0" stopColor="#e8432c" /><stop offset="1" stopColor="#ffb02e" /></linearGradient></defs>
          <path d="M4 14c2 3 5 5 4.500 9-.5 3.500-8 3.500-8.500 0-.3-3 1-4 1.500-6 1 .5 1 1.500 1.500 2 1-1.500 1-3 1-5z" fill="url(#fl)" />
          <path d="M12.500 10h8v15a7 7 0 1 1-8 0z" fill="#cfe2f7" /><circle cx="16.500" cy="30.500" r="4.300" fill="#d8274a" /><path d="M15.200 12h2.600v18h-2.600z" fill="#d8274a" />
          <circle cx="21.500" cy="11" r="10" fill="#c42b1c" />
          <text x="21.500" y="16" textAnchor="middle" fontSize="14" fill="#fff">5</text>
        </svg>
        <div className="ml-[3px] text-[14.300px] leading-[20px]">
          <div className="tracking-[-0.100px]">Sunny</div>
          <div className="tracking-[0.020px] text-[#d8d5d1]">Hot weather out...</div>
        </div>
      </div>
      <div className="flex w-[51px] shrink-0 pl-[5px]">
        <svg width="29" height="29" viewBox="0 0 29 29">
          <defs><linearGradient id="win" x1="0" y1="0" x2="1" y2="1"><stop offset="0" stopColor="#8af4ff" /><stop offset=".5" stopColor="#3fbcfb" /><stop offset="1" stopColor="#0a93fa" /></linearGradient></defs>
          <path d="M0 1q0-1 1-1h13v14H0zM15 0h13q1 0 1 1v13H15zM0 15h14v14H1q-1 0-1-1zM15 15h14v13q0 1-1 1H15z" fill="url(#win)" />
        </svg>
      </div>
      <div className="flex h-[38px] w-[273px] shrink-0 items-center rounded-full bg-[#f3f2f1] pl-[14px]">
        <svg width="18" height="19" viewBox="0 0 18 19" fill="none" stroke="#222" strokeWidth="2"><circle cx="7.800" cy="7.800" r="6.600" /><path d="m12.500 13 5 5.300" strokeWidth="2.500" /></svg>
        <span className="ml-[13px] text-[16px] text-[#555]">Search</span>
        <svg width="54" height="26" viewBox="0 0 54 26" className="mr-[6px] ml-auto">
          <path d="M0 2.500l5 .5c3.500 2 4 7 3.500 11l7-1.500c-.5 5-3 9-5.500 11.500-3 3-8 2-8-2 .5-3 4-5 4-8 .5-4 0-7-2-9z" fill="#f0a623" /><path d="M6 18c2-1 4-3 8-4-1 4-3 7-5 8s-4-2-3-4z" fill="#fbc94a" /><path d="M0 2.500l4.500 1" stroke="#3a2b45" strokeWidth="2.200" />
          <path d="M13.500 9C14 0 21-1 28 4s14 7 21 4l4.500 9c-8 5-18 4-25-1S17 10 14.500 12z" fill="#f1ebf8" />
          <path d="M13.500 9C14 0 21-1 28 4M14.500 12C17 10 21.500 11 28.500 16s17 6 25 1" fill="none" stroke="#7d66ad" strokeWidth="1.500" />
          <path d="M16 3.500l2 6M19 1.500l1.500 7M22.500 1.500l.5 7.500M26 3l-.5 8M29.500 5l-1 8.500M33 7l-1.500 8.500M36.500 8.500l-1 8.500M40 9.500v7.500" stroke="#4a3573" strokeWidth="1.700" /><path d="M44 9.500l1.500 8M48 8.500l2.500 8" stroke="#9a86c4" />
        </svg>
      </div>
      <div className="ml-[6.500px] flex">
        <AppSlot><svg width="30" height="28" viewBox="0 0 30 28"><path d="M0 8h22v19H0z" fill="#6d6a68" /><path d="M8 0h22v20H8z" fill="#f2f2f2" /><path d="M8 8h14v12H8z" fill="#b5b4b4" /></svg></AppSlot>
        <AppSlot>
          <svg width="30" height="30" viewBox="0 0 30 30"><path d="M22 0 1 18.500q-1.500 1.200 0 2.300l1.700 1.500L22 8z" fill="#0e72b8" /><path d="M22 30 1 11.500q-1.500-1.200 0-2.300l1.700-1.500L22 22z" fill="#1485cf" /><path d="M22 0l8 3.700v22.600L22 30z" fill="#2ba5f1" /></svg>
        </AppSlot>
        <AppSlot running>
          <svg width="40" height="40" viewBox="-3 -1 40 40" className="ml-[3px] shrink-0">
            <path d="M17 20 4 12.500A15 15 0 0 1 30 12.500z" fill="#e33b2e" /><path d="M17 20 4 12.500A15 15 0 0 0 17 35l6.500-11.500z" fill="#2da94f" /><path d="M17 20l13-7.500A15 15 0 0 1 17 35z" fill="#fdbd00" />
            <circle cx="17" cy="20" r="7.300" fill="#fff" /><circle cx="17" cy="20" r="5.700" fill="#3b7ded" />
            <circle cx="27" cy="9" r="10" fill="#9b968c" /><circle cx="27" cy="7.500" r="4.500" fill="#e0b39c" /><path d="M22.500 6.500c0-6 9-6 9 0-3-2-6-2-9 0z" fill="#7a4c33" /><path d="M19 15c2-4 14-4 16 0-3 5-13 5-16 0z" fill="#1d2432" />
          </svg>
        </AppSlot>
        <AppSlot>
          <svg width="29" height="26" viewBox="0 0 29 26">
            <defs><linearGradient id="c1" x1="0" y1="0" x2="0" y2="1"><stop offset="0" stopColor="#1b7fe8" /><stop offset=".5" stopColor="#35b5a0" /><stop offset="1" stopColor="#f5c518" /></linearGradient><linearGradient id="c2" x1="1" y1="0" x2="0" y2="1"><stop offset="0" stopColor="#a94bea" /><stop offset=".5" stopColor="#f0609a" /><stop offset="1" stopColor="#f7a13c" /></linearGradient></defs>
            <path d="M7 1h11q2 0 3 3l1.500 4H18q-3 0-4 3l-2 6q-1 3-4 3H4q-5 0-3-6L4 4q1-3 3-3z" fill="url(#c1)" />
            <path d="M22 25H11q-2 0-2-2l1.500-4q3 0 4-3l2-6q1-2.500 4-2.500h4q5 0 3 6.500l-3 8q-1 3-2.500 3z" fill="url(#c2)" />
            <path d="m15 10-2.500 7h-1l2.500-7z" fill="#2a241e" />
          </svg>
        </AppSlot>
        <AppSlot>
          <svg width="29" height="26" viewBox="0 0 29 26"><circle cx="16" cy="4.500" r="4.500" fill="#7b83eb" /><circle cx="25" cy="5.500" r="3" fill="#5059c9" /><path d="M20 10h9v7c0 6-5 7-9 5z" fill="#5059c9" /><path d="M9 10h13v8c0 10-13 10-13 0z" fill="#7b83eb" /><rect y="5.500" width="15" height="15" rx="1.500" fill="#4b53bc" /><path d="M4 9.500h7M7.500 9.500v8" stroke="#fff" strokeWidth="1.900" /></svg>
        </AppSlot>
        <AppSlot>
          <svg width="28" height="29" viewBox="0 0 28 29"><path d="M1 1h8l12 9-6 2Q3 10 1 1z" fill="#1f6fe5" /><path d="M27 1h-8L7 10l6 2Q25 10 27 1z" fill="#4f9af5" /><path d="M9 1h7l7 6-5 4z" fill="#a8c8fb" /><circle cx="14" cy="19" r="9.800" fill="#f0813f" /><circle cx="14" cy="19" r="7.500" fill="#ffa054" /></svg>
        </AppSlot>
        <AppSlot running>
          <svg width="30" height="27" viewBox="0 0 30 27"><path d="M0 1q0-1 1-1h9l3 3.500V8H0z" fill="#e0a010" /><path d="M0 5h12l2-1.500h15q1 0 1 1V27H0z" fill="#fdcf4a" /><path d="M5 27v-5q0-2.500 2.500-2.500h15Q25 19.500 25 22v5z" fill="#1878c9" /><path d="M9 23h12" stroke="#0b4f94" strokeWidth="1.500" /></svg>
        </AppSlot>
        <AppSlot>
          <svg width="30" height="30" viewBox="0 0 30 30">
            <defs><linearGradient id="e1" x1="0" y1="0" x2="1" y2=".5"><stop offset="0" stopColor="#1c94de" /><stop offset=".5" stopColor="#32c0d8" /><stop offset="1" stopColor="#66dd4c" /></linearGradient></defs>
            <circle cx="15" cy="15" r="15" fill="#1279cd" /><path d="M0 14C1 5 7 0 15 0c9 0 15 6 15 12 0 5-4 8-8 8-3 0-5-1-4-3 3-5-1-9-6-9C6 8 1 11 0 14z" fill="url(#e1)" /><path d="M11 13c-3 8 3 15 12 13 2-.5 3-1.500 4-2.500C22 31 13 31 9 27c-4-4-3-11 2-14z" fill="#0d4f97" /><path d="M18 17c-1 2 1 4 5 4 3 0 5-1 6.500-3l-2 6c-7 3-14-1-13-7 .500-3 4-3 3.500 0z" fill="#28251f" />
          </svg>
        </AppSlot>
        <AppSlot>
          <svg width="30" height="26" viewBox="0 0 30 26"><path d="M2 0h26v19H2z" fill="#1374cc" /><path d="M0 19h30v2H0z" fill="#0d5597" /><path d="M6 3h13v23H6z" fill="#1c96e4" /><path d="M6 3h13v8H6z" fill="#37c1f2" /><path d="M6 19h13v7H6z" fill="#0f6abf" /><path d="M10 5h5" stroke="#0f6abf" /></svg>
        </AppSlot>
        <AppSlot active><div className="mb-[2px] flex size-[28px] items-center justify-center bg-[#f4f4f4]"><TableauMark size={25} mono="#2b78a8" /></div></AppSlot>
        <AppSlot running>
          <svg width="29" height="27" viewBox="0 0 29 27"><path d="M7 0h22v27H7z" fill="#21a366" /><path d="M18 0h11v7H18z" fill="#33c481" /><path d="M7 7h11v7H7z" fill="#107c41" /><path d="M18 14h11v6H18z" fill="#107c41" /><path d="M7 20h22v7H7z" fill="#185c37" /><rect y="6" width="15" height="15" rx="1.300" fill="#107c41" /><path d="m4.500 9.500 6 8M10.500 9.500l-6 8" stroke="#fff" strokeWidth="2" /></svg>
        </AppSlot>
      </div>
      <div className="mr-[24.500px] ml-auto flex items-center">
        <svg width="14" height="9" viewBox="0 0 14 9"><path d="m1.200 7.500 5.800-5.500 5.800 5.500" fill="none" stroke="#eee" strokeWidth="2.200" /></svg>
        <svg width="22" height="22" viewBox="0 0 22 22" className="ml-[22px]" fill="none" stroke="#eee" strokeWidth="1.200"><path d="M2 10.500A8.500 8.500 0 0 1 19 7.500M20 2.500v5.500h-5.500M2.500 20v-5.500H8M3 15.500c2 3.500 5 4.500 8.500 4" /><circle cx="16" cy="16.500" r="5" fill="#0078d7" stroke="none" /></svg>
        <div className="ml-[20px] w-[32px] text-center text-[14.700px] leading-[20px] tracking-[-0.100px]"><div>ENG</div><div>IN</div></div>
        <svg width="20" height="16" viewBox="0 0 20 16" className="ml-[22px]" fill="none" stroke="#eee" strokeWidth="1.500"><path d="M1 5.500c5-5.500 13-5.500 18 0M3.800 8.500c3.500-4 9-4 12.400 0M6.500 11.300c2-2.300 5-2.300 7 0" /><circle cx="10" cy="13.500" r="1.700" fill="#eee" stroke="none" /></svg>
        <svg width="20" height="17" viewBox="0 0 20 17" className="ml-[9px]" fill="none" stroke="#eee" strokeWidth="1.400"><path d="M1 6h3.500L8.500 2v13l-4-4H1zM11 5.500c1.500 2 1.500 4 0 6M13.500 3.500c2.500 3 2.500 7 0 10" /><path d="M16 1.500c4 4 4 10 0 14" stroke="#777" /></svg>
        <svg width="21" height="18" viewBox="0 0 21 18" className="mb-[3px] ml-[10px]"><rect x="1.500" y="5" width="15.500" height="10.500" rx="2.500" fill="none" stroke="#eee" strokeWidth="1.400" /><path d="M7 6.500h8.500V14H4l3-3zM18 8h2v4.500h-2z" fill="#eee" /><path d="M5.500 1 1 8.500h2.800L2.500 14 8 6.500H5z" fill="#fff" stroke="#2a2418" strokeWidth=".7" /></svg>
        <div className="ml-[20px] text-right text-[14.700px] leading-[20px]"><div className="tracking-[-0.300px]">14:11</div><div>30-04-2025</div></div>
      </div>
    </div>
  );
}

export default function App() {
  return (
    <div className="relative flex h-[1080px] w-[1920px] flex-col overflow-hidden bg-[#f4f4f4] font-['Roboto',sans-serif] whitespace-nowrap">
      <TitleBar />
      <MenuBar />
      <Banner />
      <Toolbar />
      <div className="flex h-[802px] shrink-0">
        <DataPane />
        <Cards />
        <div className="ml-[6px] flex w-[1446px] flex-col">
          <Shelf label="Columns" pill="Age (bin)" icon={<svg width="13" height="13" viewBox="0 0 13 13"><path d="M2 0v2M6.500 0v2M11 0v2M2 3v10M6.500 3v10M11 3v10" stroke="#555" strokeWidth="1.800" /></svg>} />
          <div className="mt-[6px]">
            <Shelf label="Rows" pill="AVG(Hours-Per-We.." icon={<svg width="13" height="11" viewBox="0 0 13 11"><path d="M0 1.500h2M0 5.500h2M0 9.500h2M3 1.500h10M3 5.500h10M3 9.500h10" stroke="#555" strokeWidth="1.800" /></svg>} />
          </div>
          <div className="mt-[6px] h-[720px] border border-[#d0d0d0] bg-white">
            <Chart />
          </div>
        </div>
      </div>
      <SheetTabs />
      <StatusBar />
      <Taskbar />
      <ShowMe />
    </div>
  );
}
